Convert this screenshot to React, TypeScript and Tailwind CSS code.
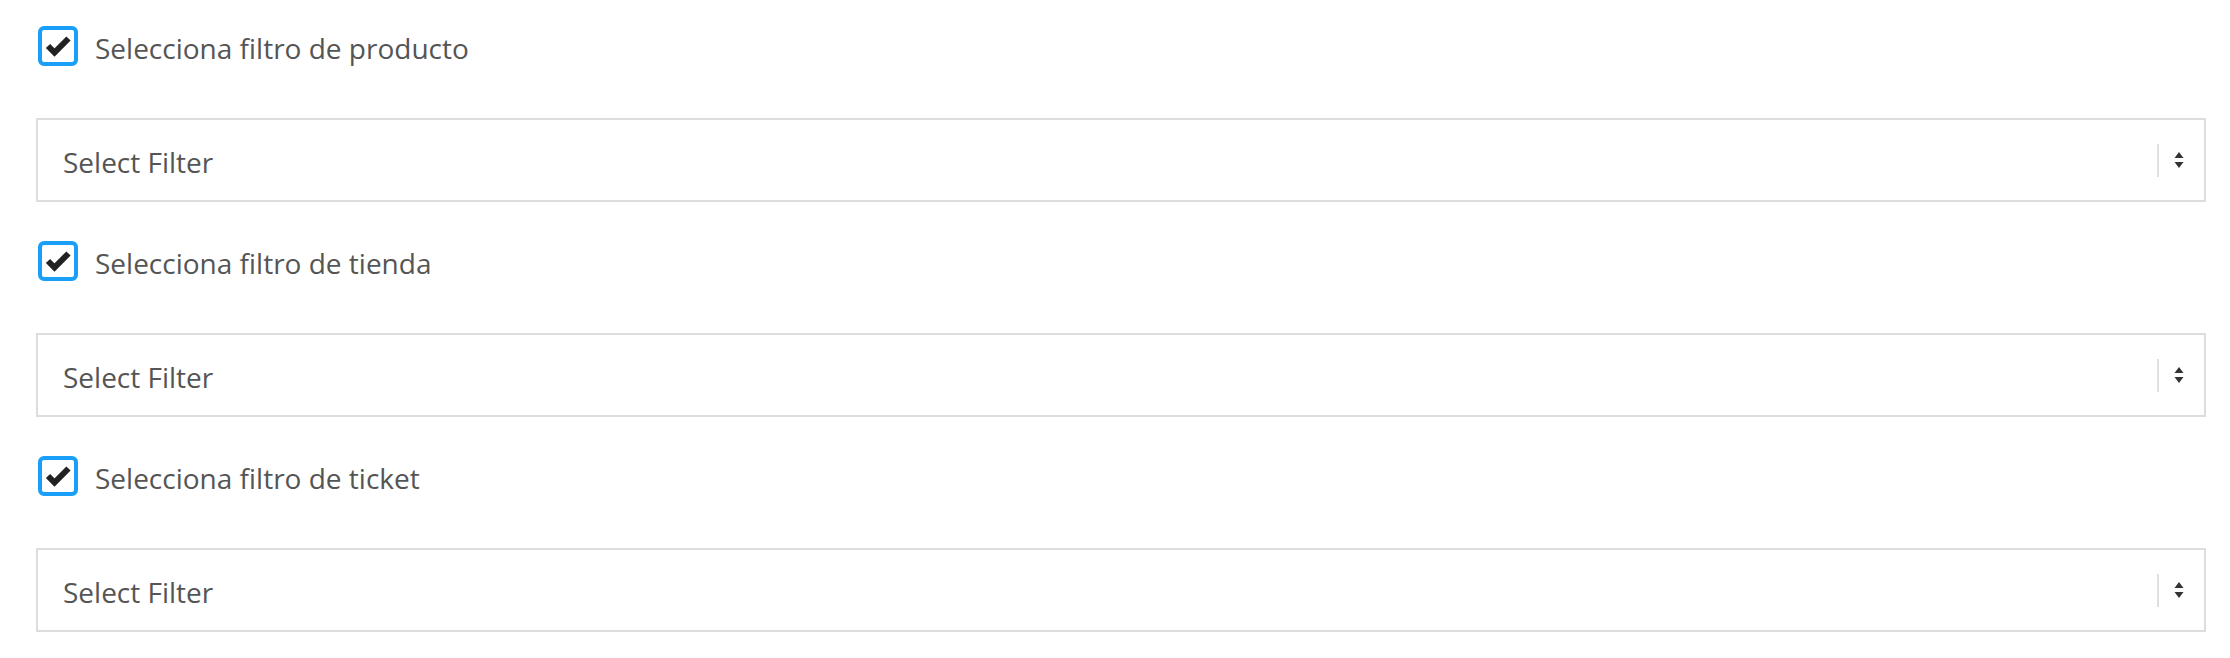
import React from "react";

function Check() {
  return (
    <div className="w-[40px] h-[40px] shrink-0 rounded-[6px] border-[4px] border-[#1a9ff8] bg-white flex items-center justify-center">
      <svg width="32" height="32" viewBox="0 0 32 32" className="block">
        <path d="M6 16 L12.5 22.5 L26.5 8.5" fill="none" stroke="#222" strokeWidth="6" strokeLinecap="butt" strokeLinejoin="miter" />
      </svg>
    </div>
  );
}

function SelectBox() {
  return (
    <div className="h-[84px] w-full border-2 border-[#dddddd] bg-white flex items-center pl-[25px] pr-[19px]">
      <span className="flex-1 text-[28px] text-[#555555] pt-[3px]">Select Filter</span>
      <div className="w-[2px] h-[33px] bg-[#e0e0e0] mr-[14px]" />
      <svg width="12" height="20" viewBox="0 0 12 20" className="block">
        <path d="M6 2 L10.5 8 L1.5 8 Z" fill="#333" />
        <path d="M6 18 L10.5 12 L1.5 12 Z" fill="#333" />
      </svg>
    </div>
  );
}

function Row({ label }: { label: string }) {
  return (
    <div className="flex flex-col">
      <div className="flex items-center pl-[2px] h-[40px]">
        <Check />
        <span className="ml-[17px] text-[28px] leading-[40px] text-[#555555] pt-[4px]">{label}</span>
      </div>
      <div className="mt-[52px]">
        <SelectBox />
      </div>
    </div>
  );
}

export default function App() {
  return (
    <div
      className="w-[2230px] h-[658px] bg-white pl-[36px] pr-[24px] pt-[26px] flex flex-col gap-[39px]"
      style={{ fontFamily: '"Open Sans", "Noto Sans", sans-serif' }}
    >
      <Row label="Selecciona filtro de producto" />
      <Row label="Selecciona filtro de tienda" />
      <Row label="Selecciona filtro de ticket" />
    </div>
  );
}
